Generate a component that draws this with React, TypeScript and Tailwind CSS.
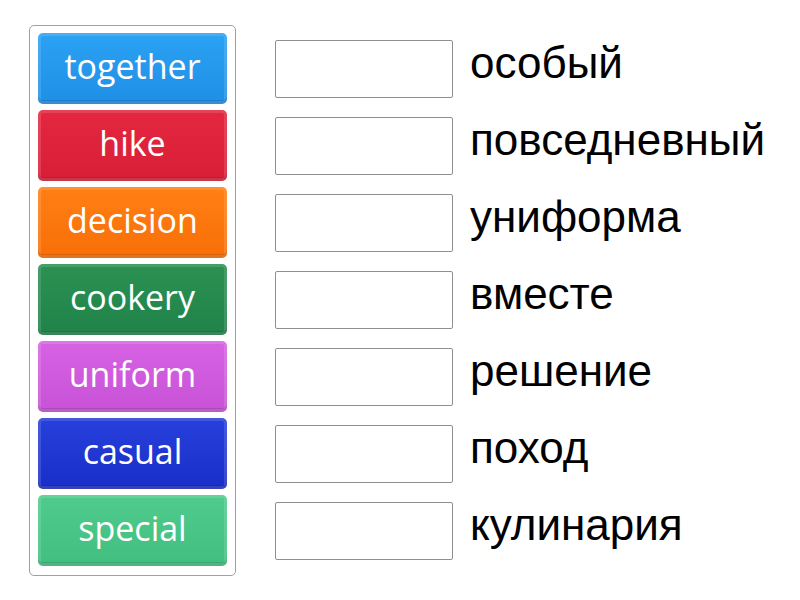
import React from "react";

const tiles = [
  { label: "together", bg: "bg-[linear-gradient(#2ba2f3,#1f8fe6)]" },
  { label: "hike", bg: "bg-[linear-gradient(#e42740,#d81e36)]" },
  { label: "decision", bg: "bg-[linear-gradient(#ff8015,#f86e07)]" },
  { label: "cookery", bg: "bg-[linear-gradient(#2b9152,#20834a)]" },
  { label: "uniform", bg: "bg-[linear-gradient(#d862e4,#c852d6)]" },
  { label: "casual", bg: "bg-[linear-gradient(#2740dc,#1a2ec8)]" },
  { label: "special", bg: "bg-[linear-gradient(#4fcb8d,#42bf80)]" },
];

const words = [
  "особый",
  "повседневный",
  "униформа",
  "вместе",
  "решение",
  "поход",
  "кулинария",
];

export default function App() {
  return (
    <div className="w-[800px] h-[600px] bg-white relative flex">
      <div className="ml-[29px] mt-[25px] w-[207px] h-[551px] border border-[#a0a0a0] rounded-[5px] pt-[7px] px-[8px] flex flex-col gap-[6px]">
        {tiles.map((t) => (
          <div
            key={t.label}
            className={`${t.bg} h-[71px] rounded-[5px] flex items-center justify-center text-white text-[34px] leading-none shadow-[inset_0_0_0_3px_rgba(255,255,255,0.13),inset_0_-4px_0_rgba(0,0,0,0.12)] pb-[6px]`}
            style={{ fontFamily: "'Open Sans', Lato, sans-serif" }}
          >
            {t.label}
          </div>
        ))}
      </div>
      <div className="ml-[39px] mt-[33px] flex flex-col gap-[6px]">
        {words.map((w) => (
          <div key={w} className="h-[71px] flex items-center">
            <div className="w-[178px] h-[58px] border border-[#8f8f8f] rounded-[2px] bg-white" />
            <div
              className="ml-[17px] text-[44px] text-black leading-none pb-[12px]"
              style={{ fontFamily: "'Liberation Sans', Arial, sans-serif" }}
            >
              {w}
            </div>
          </div>
        ))}
      </div>
    </div>
  );
}
